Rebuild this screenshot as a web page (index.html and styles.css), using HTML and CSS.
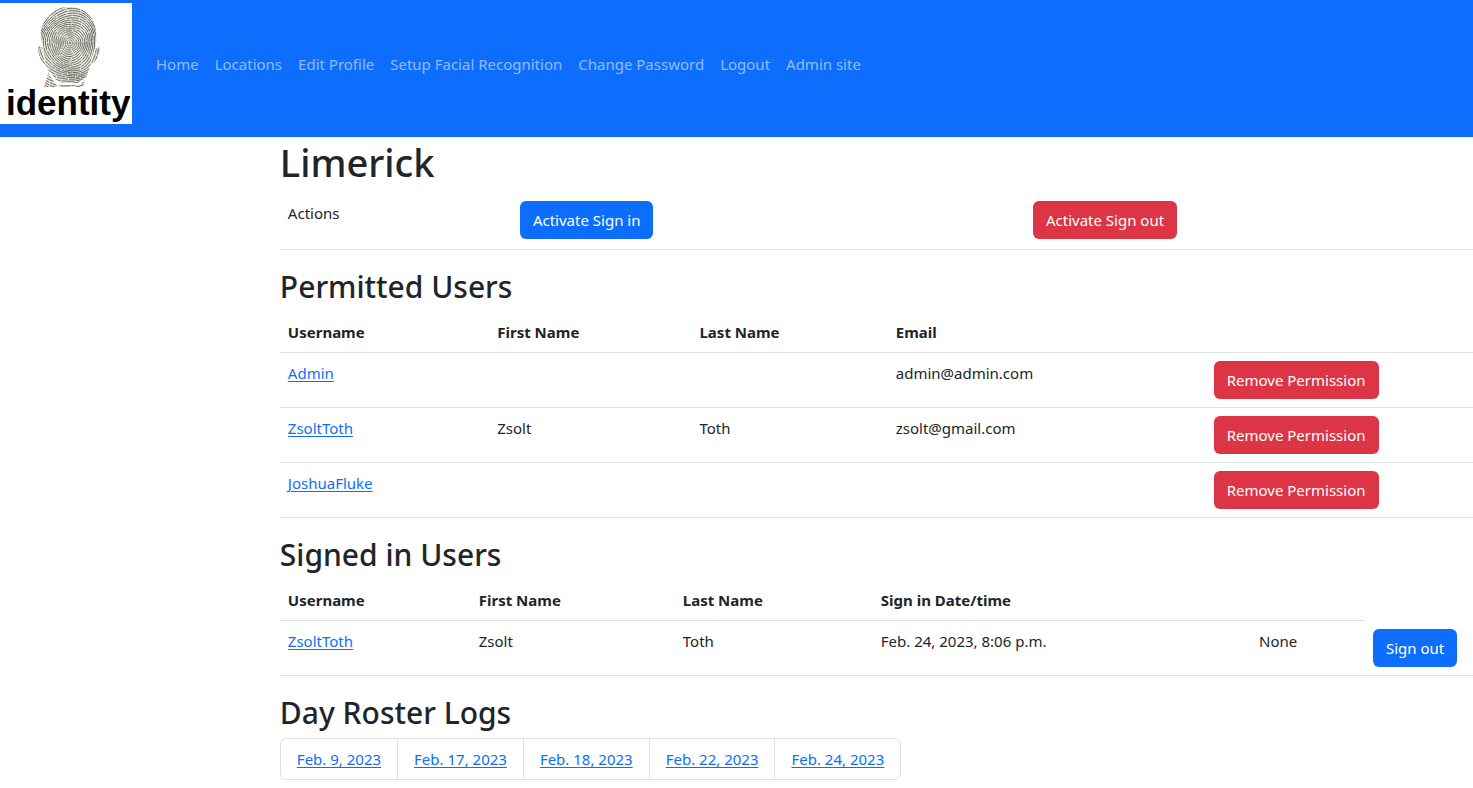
FILE: index.html
```html
<!DOCTYPE html>
<html lang="en">
<head>
<meta charset="utf-8">
<title>Limerick</title>
<link rel="stylesheet" href="styles.css">
</head>
<body>
<nav class="navbar">
  <a class="brand" href="#" aria-label="identity">
    <svg class="logo" viewBox="0 0 132 121" role="img" aria-label="identity">
      <defs>
        <clipPath id="head">
          <path d="M69 4C52 4 40 17 41 33L43 45L38 43C38 50 41 60 45 61L49 69L55 77L64 81H78L86 74L91 61C96 60 101 49 100 44L95 46C100 22 91 4 69 4Z"/>
          <path d="M49 68L44 84H58L50 73ZM56 84H83L85 76L80 82H60Z"/>
        </clipPath>
      </defs>
      <rect width="132" height="121" fill="#fff"/>
      <g clip-path="url(#head)">
        <rect x="36" y="3" width="66" height="83" fill="#e9e8e2"/>
        <g id="ridges" fill="none" stroke="#66665c" stroke-width="1"></g>
      </g>
      <path d="M49 69L55 77L61 81H78L85 76" fill="none" stroke="#fff" stroke-width="2"/>
      <path d="M42 45L45 58M95 46L91 59" fill="none" stroke="#fff" stroke-width="1"/>
      <text class="logo-text" x="6" y="112">identity</text>
    </svg>
  </a>
  <div class="nav-links">
    <a href="#">Home</a>
    <a href="#">Locations</a>
    <a href="#">Edit Profile</a>
    <a href="#">Setup Facial Recognition</a>
    <a href="#">Change Password</a>
    <a href="#">Logout</a>
    <a href="#">Admin site</a>
  </div>
</nav>
<main class="content">
  <h1>Limerick</h1>
  <table class="table actions">
    <colgroup><col class="a1"><col class="a2"><col></colgroup>
    <tbody><tr>
      <td>Actions</td>
      <td><button class="btn primary" type="button">Activate Sign in</button></td>
      <td><button class="btn danger" type="button">Activate Sign out</button></td>
    </tr></tbody>
  </table>

  <h2>Permitted Users</h2>
  <table class="table">
    <colgroup><col class="p1"><col class="p2"><col class="p3"><col class="p4"><col></colgroup>
    <thead><tr><th>Username</th><th>First Name</th><th>Last Name</th><th>Email</th><th></th></tr></thead>
    <tbody>
      <tr><td><a href="#">Admin</a></td><td></td><td></td><td>admin@admin.com</td><td><button class="btn danger" type="button">Remove Permission</button></td></tr>
      <tr><td><a href="#">ZsoltToth</a></td><td>Zsolt</td><td>Toth</td><td>zsolt@gmail.com</td><td><button class="btn danger" type="button">Remove Permission</button></td></tr>
      <tr><td><a href="#">JoshuaFluke</a></td><td></td><td></td><td></td><td><button class="btn danger" type="button">Remove Permission</button></td></tr>
    </tbody>
  </table>

  <h2>Signed in Users</h2>
  <table class="table">
    <colgroup><col class="s1"><col class="s2"><col class="s3"><col class="s4"><col class="s5"><col></colgroup>
    <thead><tr><th>Username</th><th>First Name</th><th>Last Name</th><th>Sign in Date/time</th><th></th></tr></thead>
    <tbody>
      <tr><td><a href="#">ZsoltToth</a></td><td>Zsolt</td><td>Toth</td><td>Feb. 24, 2023, 8:06 p.m.</td><td>None</td><td><button class="btn primary" type="button">Sign out</button></td></tr>
    </tbody>
  </table>

  <h2>Day Roster Logs</h2>
  <ul class="logs">
    <li><a href="#">Feb. 9, 2023</a></li>
    <li><a href="#">Feb. 17, 2023</a></li>
    <li><a href="#">Feb. 18, 2023</a></li>
    <li><a href="#">Feb. 22, 2023</a></li>
    <li><a href="#">Feb. 24, 2023</a></li>
  </ul>
</main>
<script src="logo.js"></script>
</body>
</html>
```
FILE: styles.css
```css
*, *::before, *::after { box-sizing: border-box; }
body {
  margin: 0;
  font-family: "Noto Sans", "Open Sans", sans-serif;
  font-size: 15px;
  line-height: 24px;
  color: #212529;
  background: #fff;
}
a { color: #0d6efd; text-underline-offset: 2px; }
.navbar {
  display: flex;
  align-items: center;
  gap: 16px;
  padding: 3px 0 13px;
  background: #0d6efd;
}
.brand { display: block; }
.logo { display: block; width: 132px; height: 121px; }
.logo-text { font: bold 35px "Liberation Sans", Arial, sans-serif; fill: #000; }
.nav-links { display: flex; flex-wrap: wrap; }
.nav-links a {
  padding: 8px;
  color: rgba(255, 255, 255, 0.55);
  text-decoration: none;
}
.content { margin-left: 19%; }
h1, h2 { margin: 0; font-weight: 500; }
h1 { margin-bottom: 6px; font-size: 38px; line-height: 50px; }
h2 { margin-bottom: 4px; font-size: 30px; line-height: 42px; }
.table {
  width: 100%;
  margin-bottom: 16px;
  table-layout: fixed;
  border-collapse: separate;
  border-spacing: 0;
}
.table th, .table td {
  padding: 8px;
  height: 41px;
  border-bottom: 1px solid #dee2e6;
  text-align: left;
  vertical-align: top;
  white-space: nowrap;
}
.table th { font-weight: 700; }
.actions td { padding-bottom: 10px; }
.a1 { width: 19.45%; }
.a2 { width: 43%; }
.p1 { width: 17.55%; }
.p2 { width: 16.95%; }
.p3 { width: 16.45%; }
.p4 { width: 26.65%; }
.s1 { width: 16%; }
.s2 { width: 17.1%; }
.s3 { width: 16.6%; }
.s4 { width: 31.7%; }
.s5 { width: 9.55%; }
.btn {
  display: block;
  padding: 6px 12px;
  border: 1px solid transparent;
  border-radius: 6px;
  font: inherit;
  color: #fff;
  cursor: pointer;
}
.primary { background: #0d6efd; }
.danger { background: #dc3545; }
.logs {
  display: inline-flex;
  margin: 0;
  padding: 0;
  list-style: none;
  border: 1px solid #dee2e6;
  border-radius: 6px;
}
.logs li { padding: 8px 16px; }
.logs li + li { border-left: 1px solid #dee2e6; }
```
FILE: logo.js
```js
// Draws the fingerprint ridges as wavering rings around the whorl.
const ridges = document.getElementById("ridges");
for (let r = 1; r < 62; r += 2) {
  let d = "";
  for (let i = 0; i <= 72; i++) {
    const a = (i / 72) * Math.PI * 2;
    const k = r + Math.sin(a * 3 + r / 6) * r * 0.04;
    const x = 70 + Math.cos(a) * k * 0.95;
    const y = 40 + Math.sin(a) * k * 1.02;
    d += (i ? "L" : "M") + x.toFixed(1) + " " + y.toFixed(1);
  }
  const p = document.createElementNS("http://www.w3.org/2000/svg", "path");
  p.setAttribute("d", d);
  p.setAttribute("stroke-dasharray", `${9 + (r % 7)} 1`);
  ridges.appendChild(p);
}
```
